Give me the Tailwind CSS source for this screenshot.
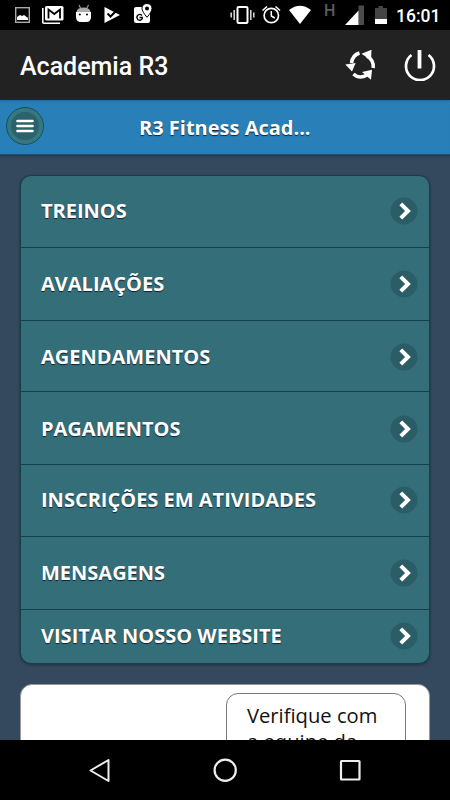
<!DOCTYPE html>
<html lang="pt-BR">
<head>
    <meta charset="UTF-8">
    <meta name="viewport" content="width=device-width, initial-scale=1.0">
    <title>Academia R3</title>
    <script src="https://cdn.jsdelivr.net/npm/@tailwindcss/browser@4"></script>
</head>
<body class="bg-black">
    <div class="flex h-[800px] w-[450px] flex-col overflow-hidden font-['Open_Sans',sans-serif]">
        <!-- status bar -->
        <div class="flex h-[30px] shrink-0 justify-between bg-black pl-[14px] pr-[11px]">
            <div class="flex gap-[11px]">
                <svg class="h-[30px] w-[17px]" viewBox="0 0 17 30"><rect x="1.7" y="7.7" width="13.6" height="14.6" fill="none" stroke="#aaa" stroke-width="1.4"/><path d="M3 20v-3l3-2 2 1 2-1 4 3v2z" fill="#fff"/></svg>
                <svg class="h-[30px] w-[22px]" viewBox="0 0 22 30"><path d="M.8 8v14.2q0 1 1 1H18" fill="none" stroke="#fff" stroke-width="1.6"/><rect x="3" y="6" width="18.500" height="14.500" rx="1.500" fill="#fff"/><path d="M6.500 18.500V9.500l5.800 4.500L18 9.500v9" fill="none" stroke="#000" stroke-width="1.800"/></svg>
                <svg class="h-[30px] w-[17px]" viewBox="0 0 17 30"><path d="M4 5l1.500 3M13.500 5L12 8" stroke="#999" stroke-width="1.2"/><path d="M1.500 12q.5-4.500 7-4.500t7 4.500z" fill="#aaa"/><path d="M1 12h15v5q0 5-5 5H6q-5 0-5-5z" fill="#fff"/><circle cx="4.800" cy="14.500" r="1"/><circle cx="12" cy="14.500" r="1"/></svg>
                <svg class="h-[30px] w-[18px]" viewBox="0 0 18 30"><path d="M1.500 7L17 15 1.500 23z" fill="#fff"/><path d="M4.500 13.500l3 3L14 10" fill="none" stroke="#000" stroke-width="2"/></svg>
                <svg class="h-[30px] w-[20px]" viewBox="0 0 20 30"><rect x="2" y="7" width="16" height="16" rx="2" fill="#fff"/><path d="M10 15.500q-2-2-4.200-.3-2 2.300.2 4.500 2.500 1.500 4.300-1V17.500H7.500" fill="none" stroke="#000" stroke-width="1.300"/><path d="M15 3.500q5 .3 5 5 0 3-5 8.800-5-5.800-5-8.800 0-4.700 5-5z" fill="#fff" stroke="#000" stroke-width="1"/><circle cx="15" cy="8.500" r="2"/></svg>
            </div>
            <div class="flex">
                <svg class="mr-[6px] h-[30px] w-[25px]" viewBox="0 0 25 30"><rect x="7.500" y="7" width="10" height="16" rx="1" fill="none" stroke="#fff" stroke-width="2"/><path d="M4.200 10v10M1.200 12.500v5M20.800 10v10M23.800 12.500v5" stroke="#ddd" stroke-width="1.500"/></svg>
                <svg class="mr-[6px] h-[30px] w-[21px]" viewBox="0 0 21 30" fill="none" stroke="#fff"><circle cx="10.300" cy="15.500" r="7.200" stroke-width="1.700"/><path d="M10.300 11v5l3.500 2" stroke-width="1.500"/><path d="M1.500 10.500l4.500-4M19 10.500l-4.500-4" stroke-width="1.600"/></svg>
                <svg class="mr-[12px] h-[30px] w-[24px]" viewBox="0 0 24 30"><path d="M1 10q11-8.500 22 0L12 24z" fill="#fff"/></svg>
                <span class="mr-[9px] w-[11px] pt-[3px] font-['Roboto',sans-serif] text-[16px] leading-[16px] font-medium text-[#5c5c5c]">H</span>
                <svg class="mr-[9px] h-[30px] w-[21px]" viewBox="0 0 21 30"><path d="M14.500 5.500H20V25h-5.500z" fill="#4c4c4c"/><path d="M14.500 10.500V25H1z" fill="#fff"/></svg>
                <svg class="mr-[8px] h-[30px] w-[14px]" viewBox="0 0 14 30"><path d="M1 8h3.500V6h4.500v2H13v16H1z" fill="#454545"/><path d="M1 19h12v5H1z" fill="#fff"/></svg>
                <span class="w-[43px] whitespace-nowrap pt-[1px] font-['Roboto',sans-serif] text-[17.500px] leading-[30px] font-medium text-white">16:01</span>
            </div>
        </div>

        <!-- app bar -->
        <div class="flex h-[70px] shrink-0 items-center bg-[#222] pl-5 pr-[14px]">
            <h1 class="grow pt-[4px] font-['Roboto',sans-serif] text-[25px] font-medium text-white">Academia R3</h1>
            <svg class="mr-[27px] h-[32px] w-[32px]" viewBox="0 0 32 32">
                <g fill="none" stroke="#fff" stroke-width="3.600"><path d="M14.500 4Q7.500 6 6.500 14"/><path d="M22 7Q29 11 28.200 19"/><path d="M8.500 25Q14.500 30.500 22 26"/></g>
                <path d="M.3 15.500l10.400-1.500L7 22.500zM16.500 4.800L26.500.8l-.5 10.400zM17 23l10-2.200-1 10z" fill="#fff"/>
            </svg>
            <svg class="h-[32px] w-[32px]" viewBox="0 0 32 32" fill="none" stroke="#fff"><path d="M7.500 6A14 14 0 1 0 24.500 6" stroke-width="2.700"/><path d="M15.500 1v18.500" stroke-width="3.800"/></svg>
        </div>

        <!-- page header -->
        <header class="flex h-[55px] shrink-0 items-center border-b border-[#1d4f70] bg-[#2980b9] pl-[6px] shadow-[inset_0_3px_3px_-2px_#2b6690]">
            <button class="mb-[2px] flex size-[38px] items-center justify-center rounded-full border border-[#164f61] bg-[#36787f]">
                <span class="flex size-[28px] items-center justify-center rounded-full bg-[#2c626c]">
                    <svg class="h-[14px] w-[18px]" viewBox="0 0 18 14"><path d="M1.500 2h15M1.500 7h15M1.500 12h15" stroke="#fff" stroke-width="2.600" stroke-linecap="round"/></svg>
                </span>
            </button>
            <h2 class="ml-[95px] mt-[2px] whitespace-nowrap text-[20px] font-bold text-white [text-shadow:0_1px_1px_#123]">R3 Fitness Acad...</h2>
        </header>

        <main class="h-[585px] shrink-0 overflow-hidden bg-[#34495e] px-[20px] pt-[20px] shadow-[inset_0_3px_3px_-2px_#263849]">
            <ul id="menu" class="overflow-hidden rounded-[11px] border border-[#123f4b] bg-[#346f79] shadow-[0_1px_3px_#0005]"></ul>

            <div class="mt-5 flex h-[120px] justify-end rounded-t-[12px] border border-[#999] bg-white pr-[23px] pt-[8px]">
                <div class="h-[110px] w-[180px] rounded-[12px] border border-[#777] pl-[20px] pt-[8px] text-[20.200px] leading-[26px] text-[#111]">Verifique com<br>a equipe da</div>
            </div>
        </main>

        <!-- navigation bar -->
        <nav class="flex h-[60px] shrink-0 items-center justify-between bg-black px-[87px]">
            <svg class="size-[25px]" viewBox="0 0 25 25"><path d="M21.500 2v21L3.500 12.500z" fill="none" stroke="#eee" stroke-width="2" stroke-linejoin="round"/></svg>
            <svg class="size-[25px]" viewBox="0 0 25 25"><circle cx="12.200" cy="12.300" r="10.600" fill="none" stroke="#eee" stroke-width="2.200"/></svg>
            <svg class="size-[25px]" viewBox="0 0 25 25"><rect x="3" y="3" width="18.500" height="18.500" rx=".5" fill="none" stroke="#eee" stroke-width="2.200"/></svg>
        </nav>
    </div>

    <script>
        // label, row height, padding above / below the label
        const items = [
            ["TREINOS", 71, 0, 1],
            ["AVALIAÇÕES", 73, 0, 0],
            ["AGENDAMENTOS", 71, 1, 0],
            ["PAGAMENTOS", 73, 2, 0],
            ["INSCRIÇÕES EM ATIVIDADES", 72, 0, 2],
            ["MENSAGENS", 73, 0, 0],
            ["VISITAR NOSSO WEBSITE", 54, 0, 1]
        ];

        document.getElementById("menu").innerHTML = items.map(([label, height, top, bottom]) => `
            <li class="flex items-center justify-between border-t border-[#123f4b] pl-[20px] pr-[11px] first:border-t-0" style="height:${height}px;padding-top:${top}px;padding-bottom:${bottom}px">
                <span class="whitespace-nowrap text-[20px] font-bold text-white [text-shadow:0_1px_1px_#123]">${label}</span>
                <svg class="size-[28px]" viewBox="0 0 28 28"><circle cx="14" cy="14" r="13.500" fill="#2b5d67"/><path d="M10.800 6.800l7.200 7.200-7.200 7.200" fill="none" stroke="#fff" stroke-width="4"/></svg>
            </li>`).join("");
    </script>
</body>
</html>
